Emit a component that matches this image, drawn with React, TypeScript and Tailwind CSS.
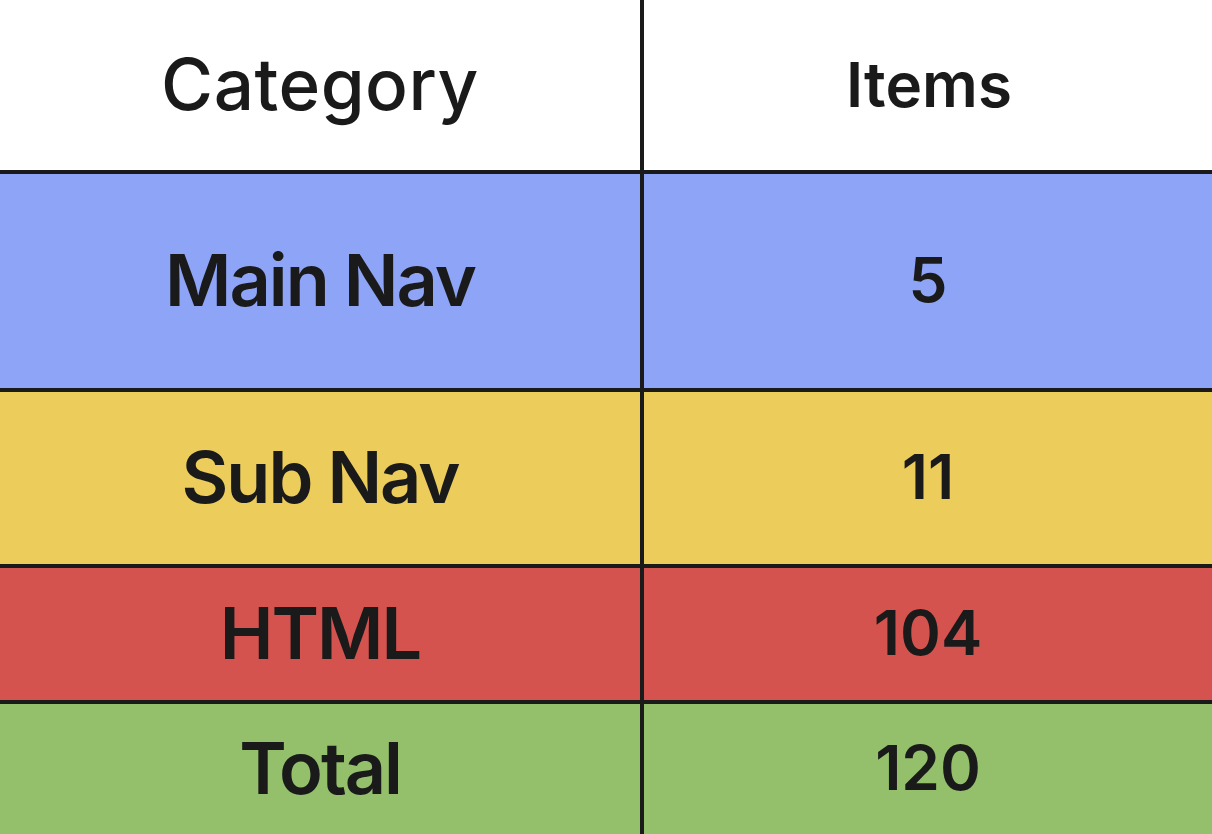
const rows = [
  { label: 'Main Nav', count: '5', bg: 'bg-[#8ea4f6]', h: 'h-[214px]' },
  { label: 'Sub Nav', count: '11', bg: 'bg-[#eccd5b]', h: 'h-[172px]' },
  { label: 'HTML', count: '104', bg: 'bg-[#d5534f]', h: 'h-[132px]' },
  { label: 'Total', count: '120', bg: 'bg-[#94c06b]', h: 'h-[130px]' },
];

export default function App() {
  return (
    <div
      className="h-[834px] w-[1212px] overflow-hidden bg-[#1a1a1a] text-[#1a1a1a]"
      style={{ fontFamily: 'Inter, "Noto Sans", sans-serif' }}
    >
      <div className="grid grid-cols-[640px_1fr] gap-[4px]">
        <div className="flex h-[170px] items-center justify-center bg-white pb-[2px] text-[71px] font-medium tracking-[0.5px]">
          Category
        </div>
        <div className="flex h-[170px] items-center justify-center bg-white pl-[2px] pb-[2px] text-[62px] font-semibold">
          Items
        </div>
        {rows.map((r) => (
          <>
            <div
              key={r.label + '-l'}
              className={`flex items-center justify-center pb-[3px] ${r.h} ${r.bg} text-[72px] font-semibold tracking-[-2px]`}
            >
              {r.label}
            </div>
            <div
              key={r.label + '-r'}
              className={`flex items-center justify-center pb-[3px] ${r.h} ${r.bg} text-[62px] font-semibold`}
            >
              {r.count}
            </div>
          </>
        ))}
      </div>
    </div>
  );
}
